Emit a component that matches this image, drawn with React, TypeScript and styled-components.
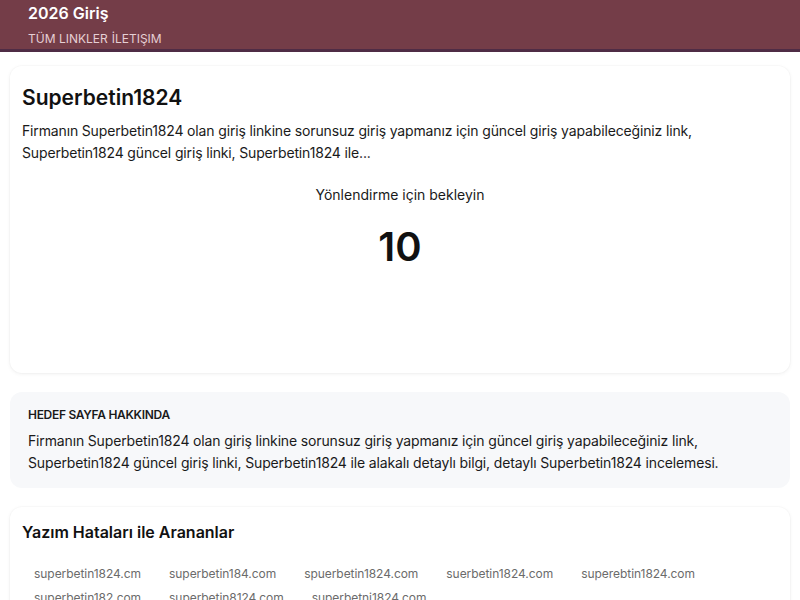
import React from 'react';
import styled, { createGlobalStyle } from 'styled-components';

const GlobalStyle = createGlobalStyle`
  body {
    margin: 0;
    background: #ffffff;
    font-family: Inter, "Noto Sans", "Liberation Sans", sans-serif;
    color: #111111;
  }
`;

const Header = styled.header`
  background: #743d48;
  border-bottom: 3px solid #4f2c45;
  height: 49px;
  padding: 0 28px;
  display: flex;
  flex-direction: column;
`;

const Brand = styled.div`
  color: #ffffff;
  font-size: 16px;
  font-weight: 600;
  line-height: 26px;
`;

const Menu = styled.nav`
  margin-top: 3px;
  color: #e6cfd4;
  font-size: 12px;
  line-height: 20px;
  display: flex;
  gap: 4px;
`;

const Main = styled.main`
  padding: 14px 10px 0;
  display: flex;
  flex-direction: column;
  gap: 19px;
`;

const Card = styled.section<{ $tint?: boolean; $pad?: string }>`
  background: ${(p) => (p.$tint ? '#f7f8fa' : '#ffffff')};
  border-radius: 12px;
  box-shadow: ${(p) =>
    p.$tint ? 'none' : '0 1px 4px rgba(0, 0, 0, 0.06), 0 0 0 1px rgba(0, 0, 0, 0.015)'};
  padding: ${(p) => p.$pad || '16px 12px'};
`;

const Title = styled.h1<{ $size?: number }>`
  margin: 0;
  font-size: ${(p) => p.$size || 21}px;
  font-weight: 600;
  line-height: 32px;
  color: #111111;
`;

const Text = styled.p<{ $top?: number }>`
  margin: ${(p) => p.$top || 0}px 0 0;
  font-size: 14px;
  letter-spacing: -0.15px;
  line-height: 22px;
  color: #1a1a1a;
`;

const Wait = styled.div`
  margin-top: 20px;
  text-align: center;
  font-size: 14px;
  line-height: 22px;
  color: #1a1a1a;
`;

const Counter = styled.div`
  text-align: center;
  font-size: 40px;
  font-weight: 600;
  line-height: 60px;
  margin-top: 11px;
  height: 140px;
  color: #111111;
`;

const Label = styled.div`
  font-size: 12px;
  font-weight: 600;
  letter-spacing: -0.3px;
  line-height: 16px;
  color: #1a1a1a;
  margin-bottom: 7px;
`;

const Tags = styled.div`
  margin-top: 15px;
  display: flex;
  flex-wrap: wrap;
  column-gap: 4px;
  row-gap: 2px;
`;

const Tag = styled.span`
  padding: 0 12px;
  font-size: 12px;
  letter-spacing: -0.05px;
  line-height: 22px;
  color: #6b6b6b;
`;

const typos = [
  'superbetin1824.cm',
  'superbetin184.com',
  'spuerbetin1824.com',
  'suerbetin1824.com',
  'superebtin1824.com',
  'superbetin182.com',
  'superbetin8124.com',
  'superbetni1824.com',
];

export default function App() {
  return (
    <>
      <GlobalStyle />
      <Header>
        <Brand>2026 Giriş</Brand>
        <Menu>
          <span>TÜM LINKLER</span>
          <span>İLETIŞIM</span>
        </Menu>
      </Header>
      <Main>
        <Card>
          <Title>Superbetin1824</Title>
          <Text $top={6}>
            Firmanın Superbetin1824 olan giriş linkine sorunsuz giriş yapmanız için güncel giriş yapabileceğiniz link,
            Superbetin1824 güncel giriş linki, Superbetin1824 ile...
          </Text>
          <Wait>Yönlendirme için bekleyin</Wait>
          <Counter>10</Counter>
        </Card>
        <Card $tint $pad="15px 18px 14px">
          <Label>HEDEF SAYFA HAKKINDA</Label>
          <Text>
            Firmanın Superbetin1824 olan giriş linkine sorunsuz giriş yapmanız için güncel giriş yapabileceğiniz link,
            Superbetin1824 güncel giriş linki, Superbetin1824 ile alakalı detaylı bilgi, detaylı Superbetin1824 incelemesi.
          </Text>
        </Card>
        <Card $pad="9px 12px 16px">
          <Title $size={16}>Yazım Hataları ile Arananlar</Title>
          <Tags>
            {typos.map((t) => (
              <Tag key={t}>{t}</Tag>
            ))}
          </Tags>
        </Card>
      </Main>
    </>
  );
}
